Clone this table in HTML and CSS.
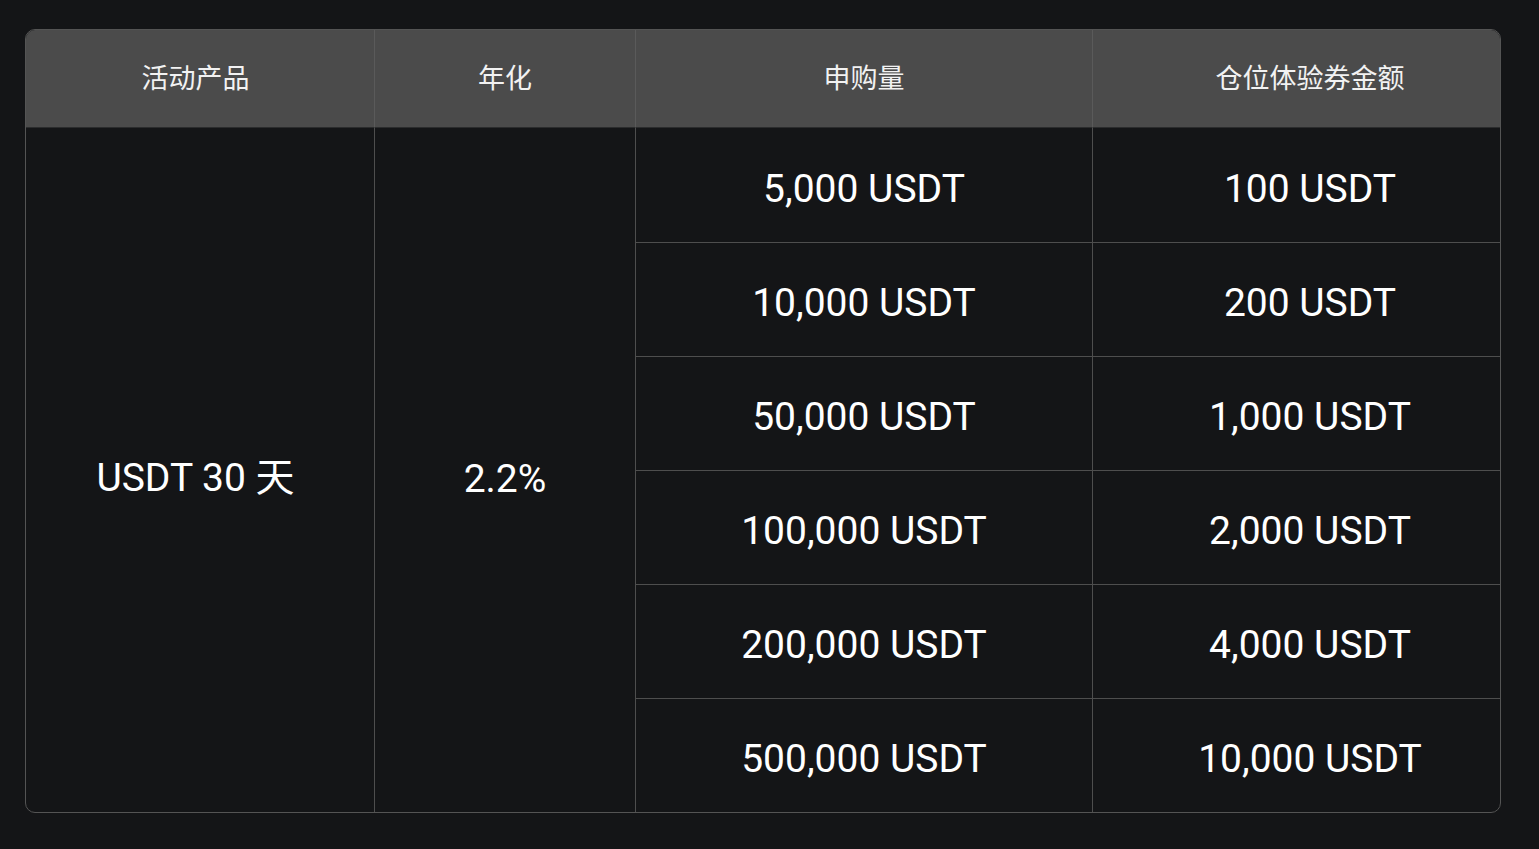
FILE: index.html
```html
<!DOCTYPE html>
<html lang="zh">
<head>
<meta charset="utf-8">
<title>活动产品</title>
<link rel="stylesheet" href="styles.css">
</head>
<body>
<div class="table">
  <div class="th c1">活动产品</div>
  <div class="th c2">年化</div>
  <div class="th c3">申购量</div>
  <div class="th c4">仓位体验券金额</div>

  <div class="td c1 span">USDT 30 天</div>
  <div class="td c2 span">2.2%</div>

  <div class="td c3">5,000 USDT</div>
  <div class="td c4">100 USDT</div>
  <div class="td c3 rule">10,000 USDT</div>
  <div class="td c4 rule">200 USDT</div>
  <div class="td c3 rule">50,000 USDT</div>
  <div class="td c4 rule">1,000 USDT</div>
  <div class="td c3 rule">100,000 USDT</div>
  <div class="td c4 rule">2,000 USDT</div>
  <div class="td c3 rule">200,000 USDT</div>
  <div class="td c4 rule">4,000 USDT</div>
  <div class="td c3 rule">500,000 USDT</div>
  <div class="td c4 rule">10,000 USDT</div>
</div>
</body>
</html>
```
FILE: styles.css
```css
html, body {
  margin: 0;
  padding: 0;
  background: #141517;
}
body {
  padding: 29px 0 0 25px;
  font-family: Roboto, "Noto Sans CJK SC", sans-serif;
  color: #ffffff;
}
.table {
  width: 1474px;
  display: grid;
  grid-template-columns: 348px 261px 457px 408px;
  grid-template-rows: 98px repeat(6, 114px);
  border: 1px solid #545454;
  border-radius: 10px;
  overflow: hidden;
  background: #141517;
}
.th, .td {
  display: flex;
  align-items: center;
  justify-content: center;
  box-sizing: border-box;
}
.th {
  background: #4b4b4b;
  border-bottom: 1px solid #2b2c2d;
  font-family: "Noto Sans CJK SC", sans-serif;
  font-size: 27px;
  color: #f2f2f2;
  padding-bottom: 5px;
}
.td {
  font-size: 39px;
  padding-top: 7px;
}
.c1 {
  padding-right: 9px;
}
.c4 {
  padding-left: 27px;
}
.c2, .c3, .c4 {
  border-left: 1px solid #4e4e4e;
}
.th.c2, .th.c3, .th.c4 {
  border-left-color: #5a5a5a;
}
.span {
  grid-row: 2 / span 6;
  padding-top: 18px;
}
.c1.span {
  grid-column: 1;
  padding-top: 8px;
}
.c2.span { grid-column: 2; }
.td.c3 { grid-column: 3; }
.td.c4 { grid-column: 4; }
.rule {
  border-top: 1px solid #4e4e4e;
}
```
